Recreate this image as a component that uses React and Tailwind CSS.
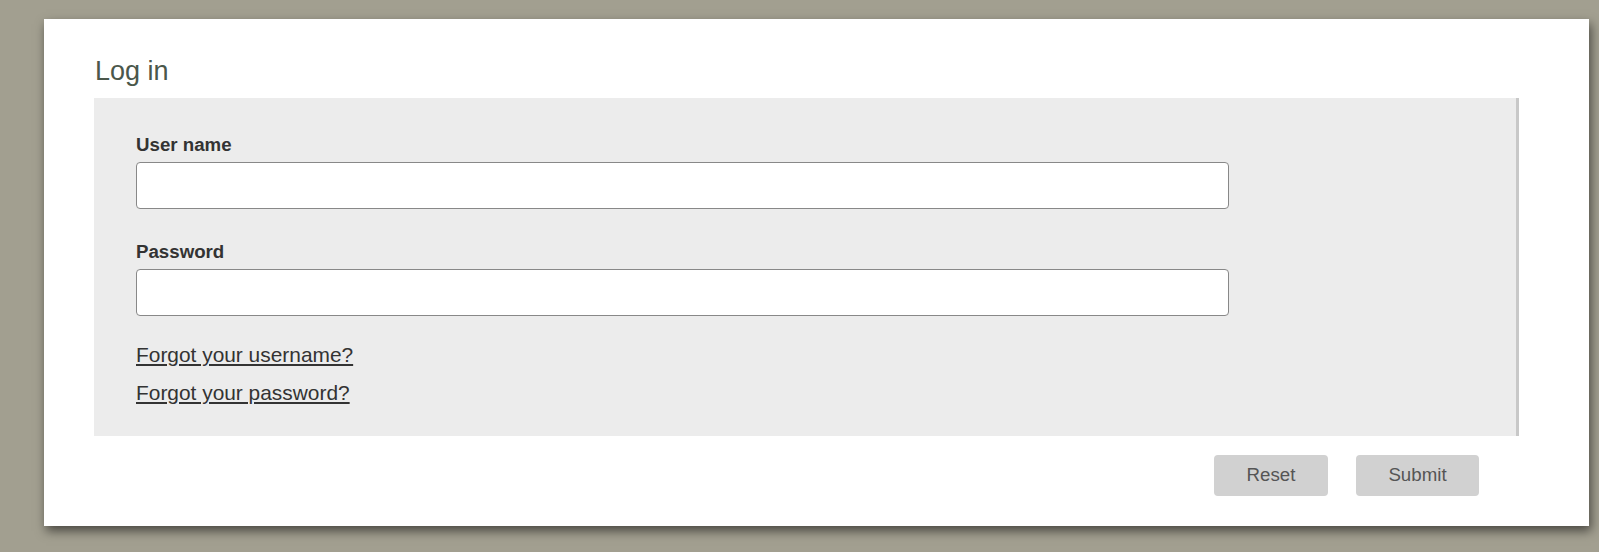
export default function App() {
  return (
    <div className="min-h-screen w-full bg-[#a29f90] pt-[19px] pl-[44px] pr-[10px] pb-[26px]" style={{ fontFamily: '"Liberation Sans", Arial, sans-serif' }}>
      <div className="w-[1545px] bg-white shadow-[2px_5px_10px_rgba(0,0,0,0.55)] pt-[37px] pl-[50px] pr-[70px] pb-[30px]">
        <h1 className="text-[27px] leading-[31px] text-[#4b574b] font-normal pl-px">Log in</h1>
        <div className="mt-[11px] bg-[#ececec] border-r-[3px] border-[#c8c8c8] pt-[36px] pb-[31px] pl-[42px]">
          <label className="block text-[18.7px] leading-[22px] font-bold text-[#333]">User name</label>
          <input type="text" className="mt-[6px] block w-[1093px] h-[47px] bg-white border border-[#888] rounded-[4px] outline-none" />
          <label className="block mt-[32px] text-[18.7px] leading-[22px] font-bold text-[#333]">Password</label>
          <input type="password" className="mt-[6px] block w-[1093px] h-[47px] bg-white border border-[#888] rounded-[4px] outline-none" />
          <div className="mt-[27px] flex flex-col gap-[14px]">
            <a href="#" className="self-start text-[20.9px] leading-[24px] text-[#333] underline underline-offset-[2px]">Forgot your username?</a>
            <a href="#" className="self-start text-[20.9px] leading-[24px] text-[#333] underline underline-offset-[2px]">Forgot your password?</a>
          </div>
        </div>
        <div className="mt-[19px] flex justify-end gap-[28px] pr-[40px]">
          <button className="w-[114px] h-[41px] rounded-[4px] bg-[#d1d1d1] text-[18.7px] text-[#555]">Reset</button>
          <button className="w-[123px] h-[41px] rounded-[4px] bg-[#d1d1d1] text-[18.7px] text-[#555]">Submit</button>
        </div>
      </div>
    </div>
  );
}
